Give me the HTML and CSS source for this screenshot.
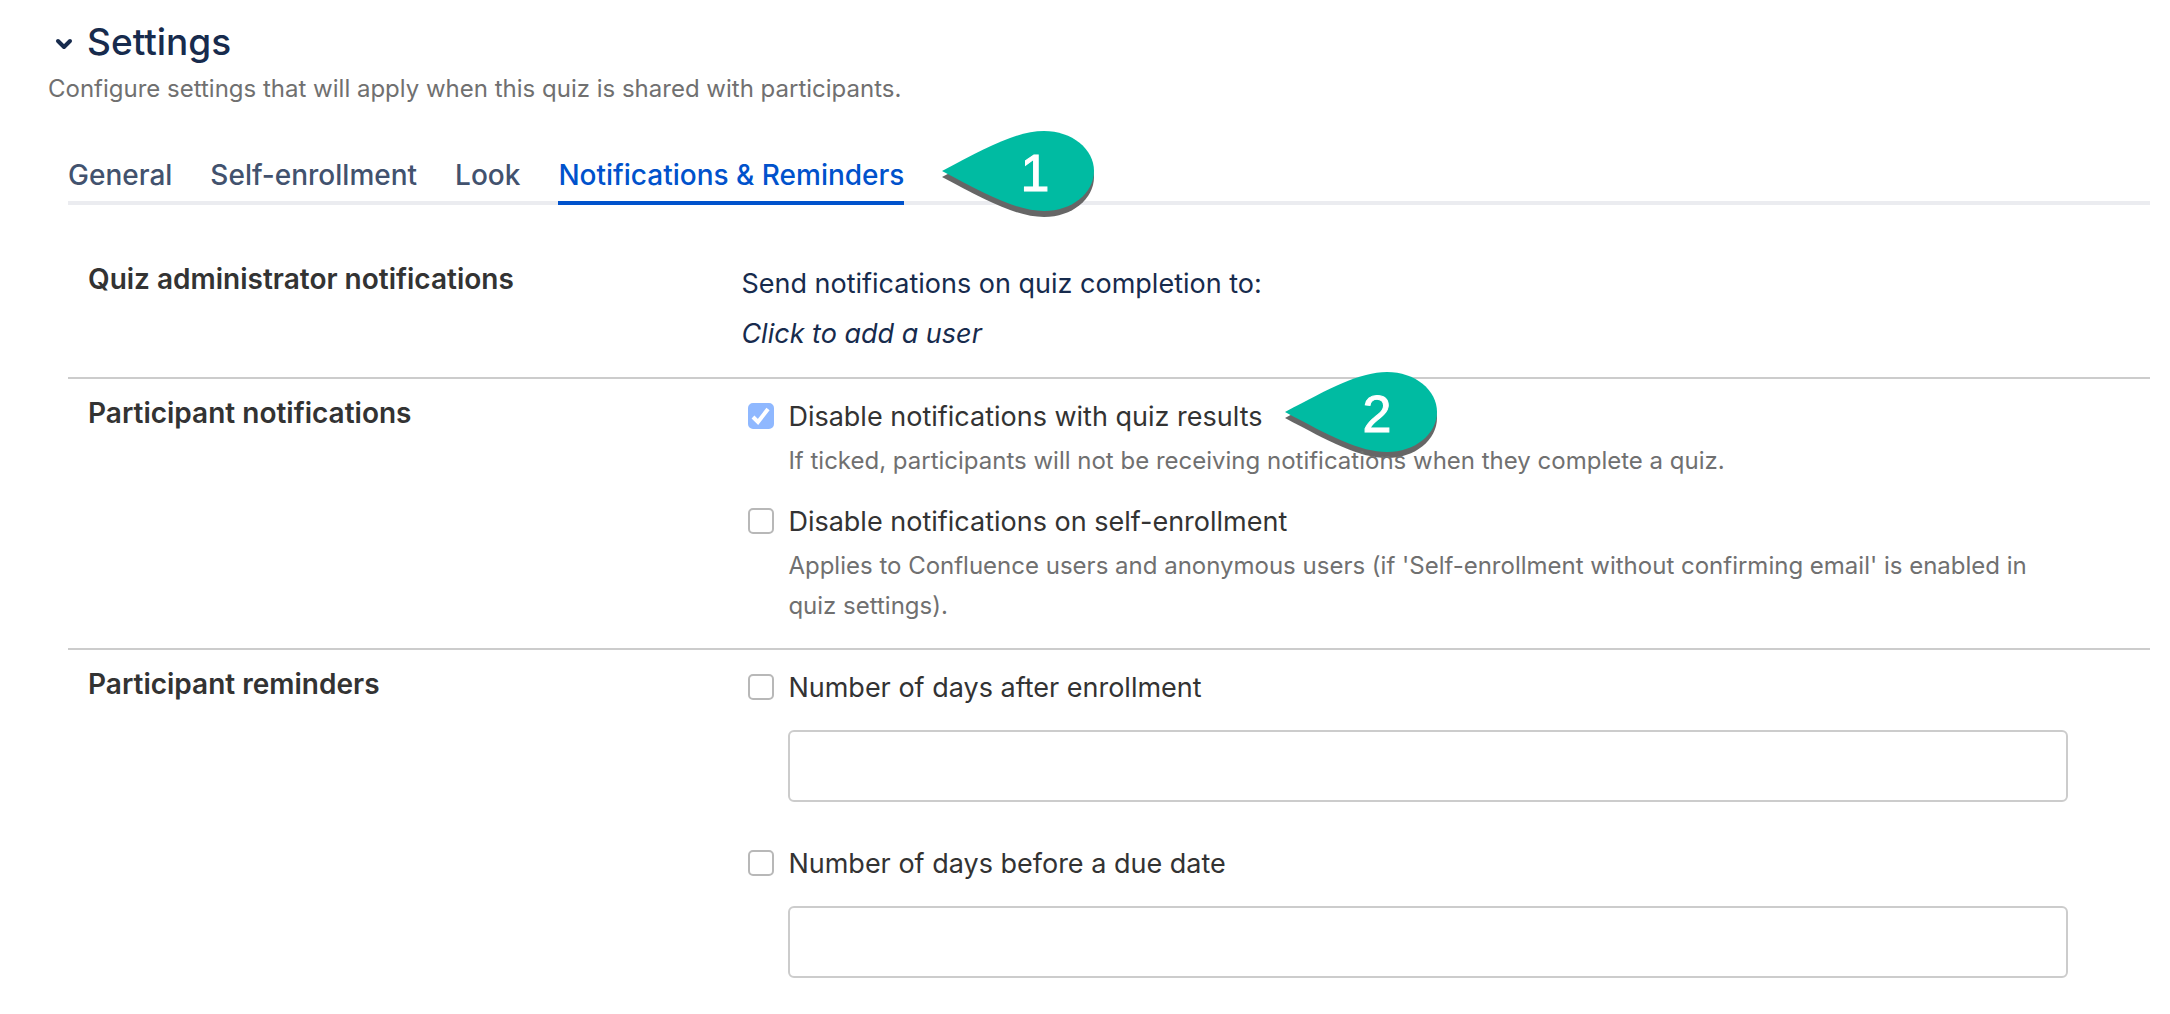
FILE: index.html
```html
<!DOCTYPE html>
<html lang="en">
<head>
    <meta charset="UTF-8">
    <meta name="viewport" content="width=device-width, initial-scale=1.0">
    <title>Quiz settings</title>
    <link rel="stylesheet" href="styles.css">
</head>
<body>
    <main class="settings">
        <h1 class="settings-title">
            <button type="button" class="toggle" aria-expanded="true" aria-label="Collapse settings">
                <svg width="18" height="12" viewBox="0 0 18 12" fill="none" stroke="currentColor" stroke-width="4" stroke-linecap="round" stroke-linejoin="round">
                    <path d="M3 3l6 6 6-6"/>
                </svg>
            </button>
            Settings
        </h1>
        <p class="intro">Configure settings that will apply when this quiz is shared with participants.</p>

        <div class="panel">
            <nav class="tabs">
                <a href="#general" class="tab">General</a>
                <a href="#self-enrollment" class="tab">Self-enrollment</a>
                <a href="#look" class="tab">Look</a>
                <a href="#notifications" class="tab active">Notifications &amp; Reminders</a>
                <span class="callout-anchor">
                    <span class="callout">
                        <svg class="callout-shape" viewBox="0 0 152 87">
                            <path class="callout-shadow" d="M0 46 C45 22 75 6 102 6 C130 6 152 24 152 46 C152 68 130 86 102 86 C75 86 45 70 0 46z"/>
                            <path class="callout-fill" d="M0 40 C45 16 75 0 102 0 C130 0 152 18 152 40 C152 62 130 80 102 80 C75 80 45 64 0 40z"/>
                        </svg>
                        <span class="callout-number">1</span>
                    </span>
                </span>
            </nav>

            <section class="row">
                <h2 class="row-title">Quiz administrator notifications</h2>
                <div class="row-body">
                    <p class="send-to">Send notifications on quiz completion to:</p>
                    <p class="send-to"><em>Click to add a user</em></p>
                </div>
            </section>

            <section class="row">
                <h2 class="row-title">Participant notifications</h2>
                <div class="row-body">
                    <div class="option">
                        <input type="checkbox" id="disableResults" class="check" checked>
                        <label for="disableResults">Disable notifications with quiz results</label>
                        <span class="callout-anchor">
                            <span class="callout">
                                <svg class="callout-shape" viewBox="0 0 152 87">
                                    <path class="callout-shadow" d="M0 46 C45 22 75 6 102 6 C130 6 152 24 152 46 C152 68 130 86 102 86 C75 86 45 70 0 46z"/>
                                    <path class="callout-fill" d="M0 40 C45 16 75 0 102 0 C130 0 152 18 152 40 C152 62 130 80 102 80 C75 80 45 64 0 40z"/>
                                </svg>
                                <span class="callout-number">2</span>
                            </span>
                        </span>
                    </div>
                    <p class="hint">If ticked, participants will not be receiving <span class="over">notifications</span> when they complete a quiz.</p>
                    <div class="option">
                        <input type="checkbox" id="disableEnrollment" class="check">
                        <label for="disableEnrollment">Disable notifications on self-enrollment</label>
                    </div>
                    <p class="hint">Applies to Confluence users and anonymous users (if 'Self-enrollment without confirming email' is enabled in quiz settings).</p>
                </div>
            </section>

            <section class="row">
                <h2 class="row-title">Participant reminders</h2>
                <div class="row-body">
                    <div class="option">
                        <input type="checkbox" id="remindAfter" class="check">
                        <label for="remindAfter">Number of days after enrollment</label>
                    </div>
                    <input type="text" class="days" aria-label="Days after enrollment">
                    <div class="option">
                        <input type="checkbox" id="remindBefore" class="check">
                        <label for="remindBefore">Number of days before a due date</label>
                    </div>
                    <input type="text" class="days" aria-label="Days before a due date">
                </div>
            </section>
        </div>
    </main>
</body>
</html>
```
FILE: styles.css
```css
* {
    box-sizing: border-box;
}
body {
    margin: 0;
    background-color: #fff;
    color: #333;
    font-family: Inter, "Liberation Sans", sans-serif;
    font-size: 27px;
    line-height: 40px;
}
h1, h2, p {
    margin: 0;
}
.settings {
    padding: 18px 20px 0 48px;
}
.settings-title {
    display: flex;
    align-items: center;
    gap: 14px;
    padding-left: 7px;
    color: #172b4d;
    font-size: 37px;
    font-weight: 500;
    line-height: 48px;
}
.toggle {
    display: flex;
    padding: 4px 0 0;
    border: 0;
    background: none;
    color: inherit;
    cursor: pointer;
}
.intro {
    margin-top: 3px;
    color: #707070;
    font-size: 24px;
}
.panel {
    margin-left: 20px;
}
.tabs {
    display: flex;
    gap: 38px;
    margin: 37px 0 40px;
    box-shadow: inset 0 -4px #ebecf0;
}
.tab {
    padding: 11px 0 8px;
    border-bottom: 4px solid transparent;
    color: #42526e;
    font-size: 28px;
    font-weight: 500;
    line-height: 36px;
    text-decoration: none;
}
.tab.active {
    border-color: #0052cc;
    color: #0052cc;
}
.row {
    display: grid;
    grid-template-columns: 33% 1fr;
    padding: 14px 82px 18px 20px;
}
.row + .row {
    border-top: 2px solid #ccc;
}
.row-title {
    font-size: 28px;
    font-weight: 600;
    line-height: 40px;
}
.send-to {
    color: #172b4d;
    line-height: 50px;
}
.option {
    display: flex;
    align-items: center;
    gap: 14px;
    padding-left: 7px;
    line-height: 48px;
}
.check {
    appearance: none;
    width: 26px;
    height: 26px;
    margin: 0 0 2px;
    border: 2px solid #b8b8b8;
    border-radius: 5px;
    background-color: #fff;
}
.check:checked {
    border-color: #8fb8ff;
    background: #8fb8ff url("data:image/svg+xml,%3Csvg xmlns='http://www.w3.org/2000/svg' viewBox='0 0 22 22' fill='none' stroke='white' stroke-width='4'%3E%3Cpath d='M3 12l5 5L18 4'/%3E%3C/svg%3E") center / 22px no-repeat;
}
.hint {
    margin-bottom: 17px;
    padding-left: 47px;
    color: #707070;
    font-size: 24px;
}
.hint:last-child {
    margin-bottom: 4px;
}
/* keeps the word readable where the pointer's edge reaches it */
.over {
    position: relative;
    z-index: 1;
}
.days {
    display: block;
    width: calc(100% - 47px);
    height: 72px;
    margin: 18px 0 38px 47px;
    padding: 0 16px;
    border: 2px solid #ccc;
    border-radius: 6px;
    font: inherit;
}

/* numbered pointers lying over the form */
.callout-anchor {
    position: relative;
    align-self: center;
}
.callout {
    position: absolute;
    top: -45px;
    left: 0;
    width: 152px;
}
.option .callout {
    left: 8px;
}
.callout-shape {
    display: block;
    width: 100%;
}
.callout-shadow {
    fill: #666;
}
.callout-fill {
    fill: #00bba2;
}
.callout-number {
    position: absolute;
    top: 0;
    left: 78px;
    color: #fff;
    font-family: "Liberation Sans", sans-serif;
    font-size: 52px;
    line-height: 84px;
    -webkit-text-stroke: 1px #fff;
}
```
